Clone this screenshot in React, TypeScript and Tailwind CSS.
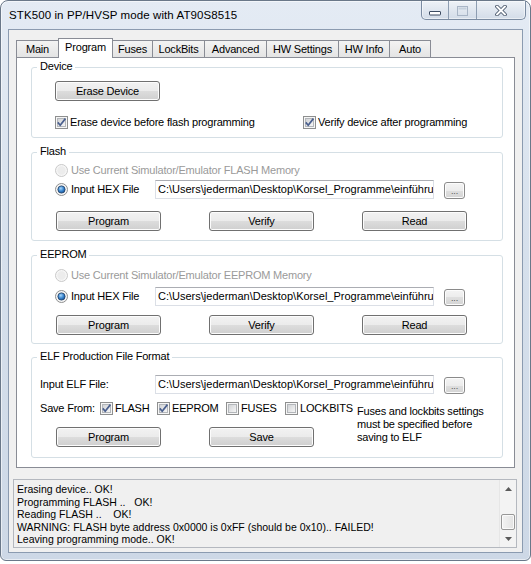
import React from 'react';

const HEX_PATH = 'C:\\Users\\jederman\\Desktop\\Korsel_Programme\\einführung';

function Button({ label }: { label: string }) {
    return (
        <button
            type="button"
            className="flex h-[20px] w-[105px] shrink-0 items-center justify-center rounded-[3px] border border-[#707070] bg-[linear-gradient(to_bottom,#f2f2f2_0%,#ebebeb_50%,#dddddd_50%,#cfcfcf_100%)] shadow-[inset_0_0_0_1px_#fcfcfc]"
        >
            {label}
        </button>
    );
}

function BrowseButton() {
    return (
        <button
            type="button"
            className="ml-[10px] flex h-[17px] w-[21px] shrink-0 items-end justify-center self-end rounded-[3px] border border-[#8a8a8a] bg-[linear-gradient(to_bottom,#f4f4f4_0%,#ececec_50%,#dfdfdf_50%,#d4d4d4_100%)] pb-[2px] text-[9px] leading-[9px] text-[#555] shadow-[inset_0_0_0_1px_#fcfcfc]"
        >
            ...
        </button>
    );
}

function TextBox() {
    return (
        <div className="h-[19px] w-[279px] shrink-0 overflow-hidden whitespace-nowrap border border-[#dbdfe6] border-t-[#abadb3] bg-white pl-[2px] pt-[2px] tracking-normal">
            {HEX_PATH}
        </div>
    );
}

function CheckBox({ checked }: { checked?: boolean }) {
    return (
        <svg width="13" height="13" viewBox="0 0 13 13" className="shrink-0">
            <defs>
                <linearGradient id="cbFill" x1="0" y1="0" x2="1" y2="1">
                    <stop offset="0" stopColor="#cfd1d4" />
                    <stop offset="1" stopColor="#f8f8f8" />
                </linearGradient>
            </defs>
            <rect x="0.5" y="0.5" width="12" height="12" fill="#f6f6f6" stroke="#8e8f8f" />
            <rect x="2.5" y="2.5" width="8" height="8" fill="url(#cbFill)" stroke="#b3b6ba" />
            {checked && (
                <path d="M2.8 6.4 L5.2 9.2 L10.4 2.6" fill="none" stroke="#4a5f8e" strokeWidth="1.7" />
            )}
        </svg>
    );
}

function Radio({ checked, disabled }: { checked?: boolean; disabled?: boolean }) {
    return (
        <svg width="13" height="13" viewBox="0 0 13 13" className="shrink-0">
            <defs>
                <radialGradient id="rbDot" cx="0.4" cy="0.35" r="0.7">
                    <stop offset="0" stopColor="#a9d7fb" />
                    <stop offset="0.55" stopColor="#3a86cf" />
                    <stop offset="1" stopColor="#164f92" />
                </radialGradient>
                <linearGradient id="rbFill" x1="0" y1="0" x2="1" y2="1">
                    <stop offset="0" stopColor="#d3d5d8" />
                    <stop offset="1" stopColor="#f9f9f9" />
                </linearGradient>
            </defs>
            <circle cx="6.5" cy="6.5" r="6" fill="#f6f6f6" stroke={disabled ? '#c9c9c9' : '#8e8f8f'} />
            <circle cx="6.5" cy="6.5" r="4.2" fill={disabled ? '#ececec' : 'url(#rbFill)'} />
            {checked && <circle cx="6.5" cy="6.5" r="3.6" fill="url(#rbDot)" stroke="#1f3f66" strokeWidth="0.8" />}
        </svg>
    );
}

function GroupBox({ title, className, children }: { title: string; className: string; children: React.ReactNode }) {
    return (
        <div className={`relative flex w-[472px] shrink-0 flex-col rounded-[3px] border border-[#d5dfe5] ${className}`}>
            <span className="absolute -top-[8px] left-[5px] bg-white px-[3px] leading-[13px]">{title}</span>
            {children}
        </div>
    );
}

const tabs = [
    { name: 'Main', width: 'w-[43px]' },
    { name: 'Program', width: 'w-[55px]', active: true },
    { name: 'Fuses', width: 'w-[41px]' },
    { name: 'LockBits', width: 'w-[53px]' },
    { name: 'Advanced', width: 'w-[63px]' },
    { name: 'HW Settings', width: 'w-[73px]' },
    { name: 'HW Info', width: 'w-[52px]' },
    { name: 'Auto', width: 'w-[42px]' },
];

function FileSection({ title, memory, pads }: { title: string; memory: string; pads: [string, string, string] }) {
    return (
        <GroupBox title={title} className={`h-[89px] pl-[23px] ${pads[0]}`}>
            <div className="flex h-[13px] items-center gap-[3px] text-[#9a9a9a]">
                <Radio disabled />
                <span>Use Current Simulator/Emulator {memory} Memory</span>
            </div>
            <div className={`flex h-[19px] items-center ${pads[1]}`}>
                <div className="flex w-[100px] items-center gap-[3px]">
                    <Radio checked />
                    <span>Input HEX File</span>
                </div>
                <TextBox />
                <BrowseButton />
            </div>
            <div className={`ml-px flex gap-[48px] ${pads[2]}`}>
                <Button label="Program" />
                <Button label="Verify" />
                <Button label="Read" />
            </div>
        </GroupBox>
    );
}

function ScrollBar() {
    return (
        <div className="flex w-[17px] flex-col border-l border-[#e6e6e6] bg-[#f3f3f3]">
            <div className="flex h-[17px] items-center justify-center">
                <svg width="7" height="4" viewBox="0 0 7 4">
                    <polygon points="3.5,0 7,4 0,4" fill="#5a5a5a" />
                </svg>
            </div>
            <div className="flex-1" />
            <div className="mx-px h-[16px] rounded-[2px] border border-[#979797] bg-[linear-gradient(to_right,#f2f2f2,#e2e2e2)] shadow-[inset_0_0_0_1px_#fafafa]" />
            <div className="flex h-[17px] items-center justify-center">
                <svg width="7" height="4" viewBox="0 0 7 4">
                    <polygon points="0,0 7,0 3.5,4" fill="#5a5a5a" />
                </svg>
            </div>
        </div>
    );
}

export default function App() {
    return (
        <div className="h-[564px] w-[531px] bg-white font-['Liberation_Sans',Arial,sans-serif] text-[11px] leading-[13px] tracking-[-0.2px] text-black">
            <div className="flex h-[561px] flex-col rounded-t-[8px] rounded-b-[6px] border border-[#6a7889] bg-[linear-gradient(to_bottom,#e4ebf4_0%,#d6e0ec_45%,#cdd8e6_100%)] px-[7px] pb-[7px] shadow-[inset_0_0_0_1px_rgba(255,255,255,0.55)]">
                {/* title bar */}
                <div className="flex h-[28px] items-start">
                    <span className="ml-px mt-[7px] text-[11.5px] leading-[15px] tracking-[0.1px]">
                        STK500 in PP/HVSP mode with AT90S8515
                    </span>
                    <div className="-mr-[3px] ml-auto flex h-[19px] overflow-hidden rounded-b-[5px] border border-t-0 border-[#7a8ba1] bg-[linear-gradient(to_bottom,#eef2f7,#d3dce8)] shadow-[inset_0_0_0_1px_rgba(255,255,255,0.5)]">
                        <div className="flex w-[27px] justify-center border-r border-[#8d9db1] pt-[10px]">
                            <svg width="12" height="5" viewBox="0 0 12 5">
                                <rect x="0.5" y="0.5" width="11" height="3.5" rx="0.5" fill="#fff" stroke="#3c4b60" />
                            </svg>
                        </div>
                        <div className="flex w-[28px] justify-center border-r border-[#8d9db1] pt-[5px]">
                            <svg width="11" height="10" viewBox="0 0 11 10">
                                <rect x="0.5" y="0.5" width="10" height="9" fill="none" stroke="#a8b5c6" />
                                <rect x="1.5" y="1.5" width="8" height="2" fill="#c4cfdc" />
                            </svg>
                        </div>
                        <div className="flex w-[48px] justify-center pt-[4px]">
                            <svg width="12" height="11" viewBox="0 0 12 11">
                                <path d="M2 1.5 L10 9.5 M10 1.5 L2 9.5" stroke="#3c4b60" strokeWidth="3.6" strokeLinecap="round" />
                                <path d="M2 1.5 L10 9.5 M10 1.5 L2 9.5" stroke="#fff" strokeWidth="2" strokeLinecap="round" />
                            </svg>
                        </div>
                    </div>
                </div>

                {/* client area */}
                <div className="flex flex-1 flex-col border border-[#8b9bb0] bg-[#f0f0f0]">
                    <div className="ml-[7px] mt-[8px] flex h-[19px] items-end">
                        {tabs.map((tab, i) =>
                            tab.active ? (
                                <div
                                    key={tab.name}
                                    className={`relative z-10 -mb-px flex h-[20px] ${tab.width} justify-center border border-b-0 border-[#898c95] bg-white pt-[2px] ${i > 0 ? '-ml-px' : ''}`}
                                >
                                    {tab.name}
                                </div>
                            ) : (
                                <div
                                    key={tab.name}
                                    className={`flex h-[17px] ${tab.width} justify-center border border-b-0 border-[#898c95] bg-[linear-gradient(to_bottom,#f3f3f3,#e4e4e4)] pt-[2px] ${i > 0 ? '-ml-px' : ''}`}
                                >
                                    {tab.name}
                                </div>
                            )
                        )}
                    </div>

                    <div className="mx-[7px] flex h-[411px] flex-col border border-[#898c95] bg-white pl-[14px] pt-[9px]">
                        <GroupBox title="Device" className="h-[71px] pl-[23px] pt-[13px]">
                            <Button label="Erase Device" />
                            <div className="mt-[15px] flex h-[13px] items-center">
                                <div className="flex w-[248px] items-center gap-[2px]">
                                    <CheckBox checked />
                                    <span>Erase device before flash programming</span>
                                </div>
                                <div className="flex items-center gap-[2px]">
                                    <CheckBox checked />
                                    <span>Verify device after programming</span>
                                </div>
                            </div>
                        </GroupBox>

                        <div className="mt-[14px]">
                            <FileSection title="Flash" memory="FLASH" pads={['pt-[11px]', 'mt-[3px]', 'mt-[12px]']} />
                        </div>
                        <div className="mt-[14px]">
                            <FileSection title="EEPROM" memory="EEPROM" pads={['pt-[13px]', 'mt-[5px]', 'mt-[9px]']} />
                        </div>

                        <GroupBox title="ELF Production File Format" className="mt-[13px] h-[101px] pl-[8px] pt-[17px]">
                            <div className="flex h-[19px] items-center">
                                <span className="w-[115px]">Input ELF File:</span>
                                <TextBox />
                                <BrowseButton />
                            </div>
                            <div className="mt-[8px] flex">
                                <div className="flex w-[317px] flex-col">
                                    <div className="flex h-[13px] items-center">
                                        <span className="w-[60px]">Save From:</span>
                                        <div className="flex w-[57px] items-center gap-[2px]">
                                            <CheckBox checked />
                                            <span>FLASH</span>
                                        </div>
                                        <div className="flex w-[69px] items-center gap-[2px]">
                                            <CheckBox checked />
                                            <span>EEPROM</span>
                                        </div>
                                        <div className="flex w-[59px] items-center gap-[2px]">
                                            <CheckBox />
                                            <span>FUSES</span>
                                        </div>
                                        <div className="flex items-center gap-[2px]">
                                            <CheckBox />
                                            <span>LOCKBITS</span>
                                        </div>
                                    </div>
                                    <div className="ml-[16px] mt-[12px] flex gap-[48px]">
                                        <Button label="Program" />
                                        <Button label="Save" />
                                    </div>
                                </div>
                                <p className="pt-[3px]">
                                    Fuses and lockbits settings
                                    <br />
                                    must be specified before
                                    <br />
                                    saving to ELF
                                </p>
                            </div>
                        </GroupBox>
                    </div>

                    {/* log output */}
                    <div className="ml-[4px] mr-[5px] mt-[11px] flex h-[69px] border border-[#b4b8bf] bg-[#f0f0f0]">
                        <div className="flex-1 whitespace-pre pl-[3px] pt-[3px] text-[10.5px] leading-[12.6px] tracking-normal">
                            <div>Erasing device.. OK!</div>
                            <div>Programming FLASH ..   OK!</div>
                            <div>Reading FLASH ..    OK!</div>
                            <div>WARNING: FLASH byte address 0x0000 is 0xFF (should be 0x10).. FAILED!</div>
                            <div>Leaving programming mode.. OK!</div>
                        </div>
                        <ScrollBar />
                    </div>
                </div>
            </div>
        </div>
    );
}
